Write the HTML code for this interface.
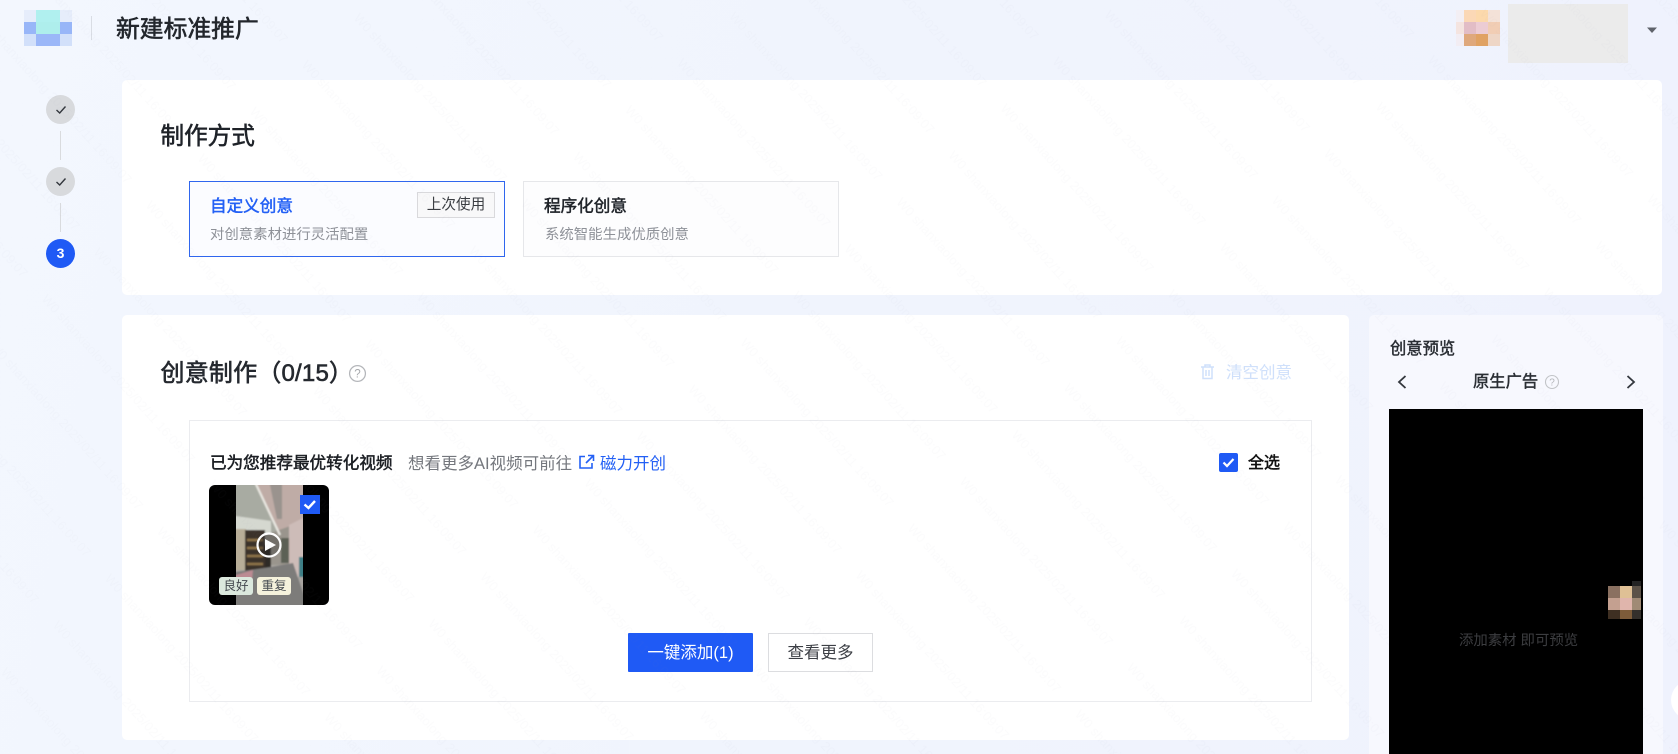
<!DOCTYPE html>
<html lang="zh"><head><meta charset="utf-8"><title>新建标准推广</title>
<style>
*{box-sizing:border-box;margin:0;padding:0}
html,body{width:1678px;height:754px;overflow:hidden}
body{position:relative;background:linear-gradient(100deg,#f3f7fe 0%,#f0f4fd 50%,#eff2fd 100%);font-family:"Liberation Sans","Noto Sans CJK SC",sans-serif;color:#1f2329}
.a{position:absolute}
.t{position:absolute;white-space:nowrap;line-height:1;transform:translateY(-50%)}
.card{position:absolute;background:#fff;border-radius:5px}
.px{position:absolute}
.step{position:absolute;left:46px;width:29px;height:29px;border-radius:50%;background:#d8dadd;display:flex;align-items:center;justify-content:center}
.ln{position:absolute;left:60px;width:1px;height:29px;background:#d9dbde}
.opt{position:absolute;top:181px;height:76px;border:1px solid #e6e7ea;background:#fdfdfe}
.m{-webkit-text-stroke:.35px currentColor}
</style></head><body>
<div class="px" style="left:24px;top:10px;width:12px;height:12px;background:#e6edfb"></div>
<div class="px" style="left:36px;top:10px;width:24px;height:12px;background:#b0f0ef"></div>
<div class="px" style="left:60px;top:10px;width:12px;height:12px;background:#e6edfb"></div>
<div class="px" style="left:24px;top:22px;width:12px;height:12px;background:#98b6f8"></div>
<div class="px" style="left:36px;top:22px;width:24px;height:12px;background:#aeeeec"></div>
<div class="px" style="left:60px;top:22px;width:12px;height:12px;background:#98b6f8"></div>
<div class="px" style="left:24px;top:34px;width:12px;height:12px;background:#d2e0fa"></div>
<div class="px" style="left:36px;top:34px;width:24px;height:12px;background:#9bb7f8"></div>
<div class="px" style="left:60px;top:34px;width:12px;height:12px;background:#d2e0fa"></div>
<div class="a" style="left:91px;top:16px;width:1px;height:24px;background:#d9dde4"></div>
<div class="t m" style="left:116px;top:30px;font-size:23.8px;color:#22262c;-webkit-text-stroke-width:.6px">新建标准推广</div>

<div class="px" style="left:1456px;top:10px;width:8px;height:12px;background:#f3eff4"></div>
<div class="px" style="left:1464px;top:10px;width:12px;height:12px;background:#fbd8b6"></div>
<div class="px" style="left:1476px;top:10px;width:12px;height:12px;background:#fcd9ac"></div>
<div class="px" style="left:1488px;top:10px;width:12px;height:12px;background:#f4e2d8"></div>
<div class="px" style="left:1456px;top:22px;width:8px;height:12px;background:#f4e4e0"></div>
<div class="px" style="left:1464px;top:22px;width:12px;height:12px;background:#e2bdc6"></div>
<div class="px" style="left:1476px;top:22px;width:12px;height:12px;background:#ecccd4"></div>
<div class="px" style="left:1488px;top:22px;width:12px;height:12px;background:#f1cdb4"></div>
<div class="px" style="left:1456px;top:34px;width:8px;height:12px;background:#f2edf3"></div>
<div class="px" style="left:1464px;top:34px;width:12px;height:12px;background:#dfa87c"></div>
<div class="px" style="left:1476px;top:34px;width:12px;height:12px;background:#e0a263"></div>
<div class="px" style="left:1488px;top:34px;width:12px;height:12px;background:#eed6c6"></div>
<div class="a" style="left:1508px;top:4px;width:120px;height:59px;background:#ebebeb"></div>
<svg class="a" style="left:1646px;top:27px" width="12" height="7"><path d="M1 0.5H11L6 6Z" fill="#5f636b"/></svg>

<div class="step" style="top:95px"><svg width="12" height="10"><path d="M1.5 5L4.7 8L10.5 1.5" fill="none" stroke="#33373d" stroke-width="1.4"/></svg></div>
<div class="ln" style="top:131px"></div>
<div class="step" style="top:167px"><svg width="12" height="10"><path d="M1.5 5L4.7 8L10.5 1.5" fill="none" stroke="#33373d" stroke-width="1.4"/></svg></div>
<div class="ln" style="top:203px"></div>
<div class="step" style="top:238.5px;background:#1f5af5;color:#fff;font-size:14px;font-weight:700">3</div>

<div class="card" style="left:122px;top:80px;width:1540px;height:215px"></div>
<div class="t m" style="left:160.5px;top:138px;font-size:23.6px;-webkit-text-stroke-width:.6px">制作方式</div>
<div class="opt" style="left:189px;width:316px;border-color:#2f66ee;background:#fbfcff"></div>
<div class="t m" style="left:210px;top:207px;font-size:16.6px;color:#2360f5;-webkit-text-stroke-width:.5px">自定义创意</div>
<div class="t" style="left:210px;top:235px;font-size:14.4px;color:#8e9198">对创意素材进行灵活配置</div>
<div class="a" style="left:417px;top:192px;width:78px;height:26px;border:1px solid #d9d9dc;background:#f8f8f9;font-size:14.6px;line-height:25px;text-align:center;color:#3a3d42">上次使用</div>
<div class="opt" style="left:523px;width:316px"></div>
<div class="t m" style="left:544px;top:207px;font-size:16.6px;color:#1f2329;-webkit-text-stroke-width:.5px">程序化创意</div>
<div class="t" style="left:545px;top:235px;font-size:14.4px;color:#8e9198">系统智能生成优质创意</div>

<div class="card" style="left:122px;top:315px;width:1227px;height:425px"></div>
<div class="t m" style="left:160.5px;top:374px;font-size:24px;letter-spacing:.2px;color:#25292f;-webkit-text-stroke-width:.6px">创意制作（0/15）</div>
<svg class="a" style="left:347.5px;top:363.5px" width="19" height="19" viewBox="0 0 18 18"><circle cx="9" cy="9" r="7.5" fill="none" stroke="#b4b6ba" stroke-width="1.2"/><text x="9" y="13" font-size="11" text-anchor="middle" fill="#a8aaae" font-family="Liberation Sans">?</text></svg>
<svg class="a" style="left:1200px;top:363px" width="15" height="17" viewBox="0 0 15 17"><path d="M1 4H14M5 4V2H10V4M3 4V15.5H12V4M6 7V13M9 7V13" fill="none" stroke="#cfe0fb" stroke-width="1.5"/></svg>
<div class="t" style="left:1226px;top:373px;font-size:16.5px;color:#cfe0fb">清空创意</div>

<div class="a" style="left:189px;top:420px;width:1123px;height:282px;border:1.5px solid #ebecef;background:#fff"></div>
<div class="t m" style="left:210px;top:463.5px;font-size:16.6px;color:#1c1f24;-webkit-text-stroke-width:.5px">已为您推荐最优转化视频</div>
<div class="t" style="left:408px;top:463.5px;font-size:16.5px;color:#74777d">想看更多AI视频可前往</div>
<svg class="a" style="left:578px;top:454px" width="17" height="16" viewBox="0 0 17 16"><path d="M7 2.5H2V14H14V9M10 1.5H15.5V7M15.5 1.5L8 9" fill="none" stroke="#2360f5" stroke-width="1.6"/></svg>
<div class="t" style="left:600px;top:463.5px;font-size:16.5px;color:#2360f5">磁力开创</div>
<div class="a" style="left:1219px;top:453px;width:19px;height:19px;background:#1f5af5;border-radius:2px"></div>
<svg class="a" style="left:1219px;top:453px" width="19" height="19"><path d="M4.5 9.5L8 13L14.5 6" fill="none" stroke="#fff" stroke-width="2.2"/></svg>
<div class="t m" style="left:1248px;top:464px;font-size:16px;color:#111;-webkit-text-stroke-width:.5px">全选</div>

<svg class="a" style="left:209px;top:485px" width="120" height="120" viewBox="0 0 120 120">
<defs><clipPath id="c"><rect width="120" height="120" rx="6"/></clipPath><clipPath id="v"><rect x="27" width="67" height="120"/></clipPath><filter id="bl"><feGaussianBlur stdDeviation="0.9"/></filter></defs>
<g clip-path="url(#c)"><rect width="120" height="120" fill="#000"/>
<g clip-path="url(#v)"><g filter="url(#bl)">
<rect x="20" y="-5" width="80" height="130" fill="#a9a5a0"/>
<path d="M20 -5H45L71 50L20 36Z" fill="#a8aba2"/>
<path d="M20 30L62 36L62 60L20 55Z" fill="#d5d8d0"/>
<path d="M45 -5H100V38L71 50Z" fill="#bfaca6"/>
<path d="M60 -5H73V34H68Z" fill="#9a938e"/>
<path d="M20 44H37V85H20Z" fill="#b8ae98"/>
<path d="M36 45H56V88H36Z" fill="#3a322a"/>
<path d="M38 55H54M38 63H54M38 71H54M38 79H54" stroke="#8f7448" stroke-width="2.5"/>
<path d="M56 50L84 40V80H56Z" fill="#9a958d"/>
<path d="M72 53H80V78H72Z" fill="#5c6054"/>
<path d="M80 40L100 30V92H80Z" fill="#cdbcb8"/>
<path d="M56 60H62V92H56Z" fill="#2e2b28"/>
<path d="M20 88L62 82L84 78L100 125H20Z" fill="#7d7c7a"/>
<path d="M20 92L44 85L42 105L20 108Z" fill="#bb8b93"/>
<path d="M90 72H100V92H90Z" fill="#3d7f86"/>
<path d="M45 -5L71 50" stroke="#e8e6e0" stroke-width="2.2"/>
</g></g>
<circle cx="60" cy="60" r="11.5" fill="rgba(40,40,40,.35)" stroke="#fff" stroke-width="2.2"/>
<path d="M56 54L67 60L56 66Z" fill="#fff"/></g>
</svg>
<div class="a" style="left:300px;top:495px;width:20px;height:19px;background:#1f5af5"></div>
<svg class="a" style="left:300px;top:495px" width="20" height="19"><path d="M4.5 9.5L8.5 13L15 6" fill="none" stroke="#fff" stroke-width="2.4"/></svg>
<div class="a" style="left:219px;top:577px;width:34px;height:18px;background:#dbe8dd;border-radius:3px;font-size:12.5px;line-height:19px;text-align:center;color:#44494f">良好</div>
<div class="a" style="left:257px;top:577px;width:34px;height:18px;background:#f5f2dc;border-radius:3px;font-size:12.5px;line-height:19px;text-align:center;color:#44494f">重复</div>

<div class="a" style="left:628px;top:633px;width:125px;height:39px;background:#1f5af5;border-radius:1px;color:#fff;font-size:16.5px;line-height:41px;text-align:center">一键添加(1)</div>
<div class="a" style="left:768px;top:633px;width:105px;height:39px;background:#fff;border:1.5px solid #dcdde0;color:#3c3f45;font-size:16.5px;line-height:38px;text-align:center">查看更多</div>

<div class="a" style="left:1369px;top:315px;width:294px;height:439px;background:#f7f8fe;border-radius:5px 5px 0 0"></div>
<div class="t m" style="left:1390px;top:349px;font-size:16.3px;color:#2a2e34;-webkit-text-stroke-width:.45px">创意预览</div>
<svg class="a" style="left:1396px;top:374px" width="12" height="16"><path d="M9.5 2L3 8L9.5 14" fill="none" stroke="#33373d" stroke-width="1.8"/></svg>
<div class="t m" style="left:1473px;top:382px;font-size:16.3px;color:#2a2e34;-webkit-text-stroke-width:.45px">原生广告</div>
<svg class="a" style="left:1544px;top:374px" width="16" height="16" viewBox="0 0 16 16"><circle cx="8" cy="8" r="6.5" fill="none" stroke="#c2c4c8" stroke-width="1.1"/><text x="8" y="11.5" font-size="10" text-anchor="middle" fill="#b4b6ba" font-family="Liberation Sans">?</text></svg>
<svg class="a" style="left:1625px;top:374px" width="12" height="16"><path d="M2.5 2L9 8L2.5 14" fill="none" stroke="#33373d" stroke-width="1.8"/></svg>
<div class="a" style="left:1389px;top:409px;width:254px;height:345px;background:#000"></div>
<div class="t" style="left:1459px;top:640.5px;font-size:14.4px;color:#3c3d40">添加素材 即可预览</div>
<div class="px" style="left:1632px;top:581px;width:9px;height:5px;background:#232323"></div>
<div class="px" style="left:1608px;top:586px;width:12px;height:12px;background:#8a7060"></div>
<div class="px" style="left:1620px;top:586px;width:12px;height:12px;background:#dfc095"></div>
<div class="px" style="left:1632px;top:586px;width:9px;height:12px;background:#5c5248"></div>
<div class="px" style="left:1608px;top:598px;width:12px;height:12px;background:#c4a090"></div>
<div class="px" style="left:1620px;top:598px;width:12px;height:12px;background:#e0b5ac"></div>
<div class="px" style="left:1632px;top:598px;width:9px;height:12px;background:#a08a75"></div>
<div class="px" style="left:1608px;top:610px;width:12px;height:9px;background:#3e2f22"></div>
<div class="px" style="left:1620px;top:610px;width:12px;height:9px;background:#7d5c3a"></div>
<div class="px" style="left:1632px;top:610px;width:9px;height:9px;background:#34302c"></div>
<div class="a" style="left:1671px;top:680px;width:40px;height:40px;border-radius:50%;background:#fff"></div>

<svg class="a" style="left:0;top:0;pointer-events:none" width="1678" height="754">
<defs><pattern id="w" width="250" height="70" patternUnits="userSpaceOnUse" patternTransform="rotate(48)"><text x="0" y="30" font-size="13" fill="#8a94a8" fill-opacity=".03" font-family="Liberation Sans">W0 shanxiaolong 2025/02/11 16:09:07</text></pattern></defs>
<path d="M0 0H1678V754H1643V409H1389V754H0Z" fill="url(#w)"/></svg>
</body></html>
